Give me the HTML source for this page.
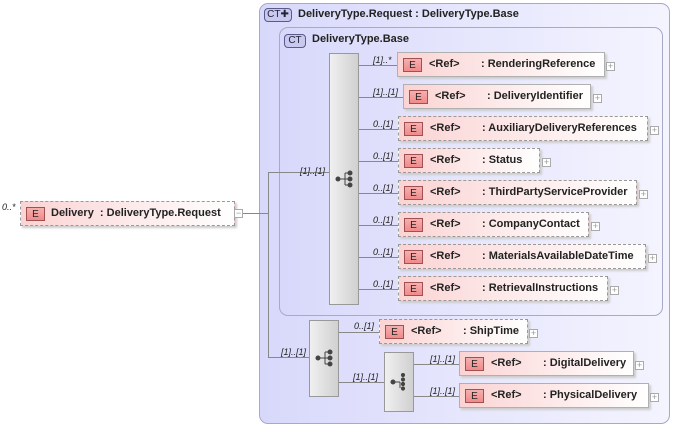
<!DOCTYPE html>
<html><head><meta charset="utf-8"><style>
body{margin:0;width:674px;height:426px;background:#fff;position:relative;overflow:hidden;font-family:"Liberation Sans",sans-serif}
div{position:absolute;box-sizing:border-box}
.ct{border:1px solid #a8a8c8;border-radius:9px;background:linear-gradient(to right,#d8d8fb,#f4f4ff)}
.badge{border:1px solid #5a5a8a;border-radius:4px;background:#c8c8f0;font-size:10px;line-height:12px;height:14px;text-align:center;color:#223}
.t{font-size:11px;font-weight:bold;color:#222;white-space:nowrap}
.el{height:25px;border:1px solid #b0b0b0;background:linear-gradient(to right,#fbd3d3,#ffffff);box-shadow:2px 2px 2px #ccc}
.el.d{border:1px dashed #999}
.el .e{left:5px;top:5px;width:19px;height:14px;border:1px solid #a05050;background:linear-gradient(#f5b0b0,#f08a8a);font-size:10px;text-align:center;line-height:13px;color:#222}
.el .r{left:31px;top:5px;font-size:11px;font-weight:bold;color:#222;white-space:nowrap}
.el .n{top:5px;font-size:11px;font-weight:bold;color:#222;white-space:nowrap}
.pl{width:9px;height:9px;border:1px solid #aaa;background:#fff;font-size:9px;line-height:7px;text-align:center;color:#999}
.seq{border:1px solid #999;background:linear-gradient(to right,#f0f0f0,#d0d0d0)}
.h{height:1px;background:#888}.v{width:1px;background:#888}
.c{font-size:9px;font-style:italic;color:#222;white-space:nowrap}
</style></head><body>
<div class="ct" style="left:259px;top:3px;width:411px;height:421px"></div>
<div class="badge" style="left:264px;top:8px;width:28px">CT✚</div>
<div class="t" style="left:298px;top:8px">DeliveryType.Request : DeliveryType.Base</div>
<div class="ct" style="left:279px;top:27px;width:384px;height:289px"></div>
<div class="badge" style="left:284px;top:34px;width:22px">CT</div>
<div class="t" style="left:312px;top:33px">DeliveryType.Base</div>

<div class="seq" style="left:329px;top:53px;width:30px;height:252px"></div>
<svg style="position:absolute;left:335px;top:170px" width="20" height="18"><g fill="#444" stroke="#444"><circle cx="3" cy="9" r="2"/><line x1="3" y1="9" x2="10" y2="9"/><line x1="10" y1="3" x2="10" y2="15"/><line x1="10" y1="3" x2="15" y2="3"/><line x1="10" y1="9" x2="15" y2="9"/><line x1="10" y1="15" x2="15" y2="15"/><circle cx="15" cy="3" r="2"/><circle cx="15" cy="9" r="2"/><circle cx="15" cy="15" r="2"/></g></svg>

<!-- connector lines -->
<div class="h" style="left:236px;top:213px;width:32px"></div>
<div class="v" style="left:268px;top:172px;height:186px"></div>
<div class="h" style="left:268px;top:172px;width:61px"></div>
<div class="h" style="left:268px;top:357px;width:41px"></div>
<div class="c" style="left:300px;top:166px">[1]..[1]</div>
<div class="c" style="left:281px;top:347px">[1]..[1]</div>

<div class="c" style="left:2px;top:202px">0..*</div>
<div class="el d" style="left:20px;top:201px;width:215px"><div class="e">E</div><div class="r" style="left:30px">Delivery&nbsp;&nbsp;: DeliveryType.Request</div></div>
<div class="pl" style="left:234px;top:209px">−</div>

<!-- children of seq1 -->
<div class="h" style="left:359px;top:65px;width:38px"></div><div class="c" style="left:373px;top:55px">[1]..*</div>
<div class="el" style="left:397px;top:52px;width:208px"><div class="e">E</div><div class="r">&lt;Ref&gt;</div><div class="n" style="left:83px">: RenderingReference</div></div><div class="pl" style="left:606px;top:62px">+</div>

<div class="h" style="left:359px;top:97px;width:44px"></div><div class="c" style="left:373px;top:87px">[1]..[1]</div>
<div class="el" style="left:403px;top:84px;width:188px"><div class="e">E</div><div class="r">&lt;Ref&gt;</div><div class="n" style="left:83px">: DeliveryIdentifier</div></div><div class="pl" style="left:593px;top:94px">+</div>

<div class="h" style="left:359px;top:129px;width:39px"></div><div class="c" style="left:373px;top:119px">0..[1]</div>
<div class="el d" style="left:398px;top:116px;width:250px"><div class="e">E</div><div class="r">&lt;Ref&gt;</div><div class="n" style="left:83px">: AuxiliaryDeliveryReferences</div></div><div class="pl" style="left:650px;top:126px">+</div>

<div class="h" style="left:359px;top:161px;width:39px"></div><div class="c" style="left:373px;top:151px">0..[1]</div>
<div class="el d" style="left:398px;top:148px;width:142px"><div class="e">E</div><div class="r">&lt;Ref&gt;</div><div class="n" style="left:83px">: Status</div></div><div class="pl" style="left:542px;top:158px">+</div>

<div class="h" style="left:359px;top:193px;width:39px"></div><div class="c" style="left:373px;top:183px">0..[1]</div>
<div class="el d" style="left:398px;top:180px;width:239px"><div class="e">E</div><div class="r">&lt;Ref&gt;</div><div class="n" style="left:83px">: ThirdPartyServiceProvider</div></div><div class="pl" style="left:639px;top:190px">+</div>

<div class="h" style="left:359px;top:225px;width:39px"></div><div class="c" style="left:373px;top:215px">0..[1]</div>
<div class="el d" style="left:398px;top:212px;width:191px"><div class="e">E</div><div class="r">&lt;Ref&gt;</div><div class="n" style="left:83px">: CompanyContact</div></div><div class="pl" style="left:591px;top:222px">+</div>

<div class="h" style="left:359px;top:257px;width:39px"></div><div class="c" style="left:373px;top:247px">0..[1]</div>
<div class="el d" style="left:398px;top:244px;width:248px"><div class="e">E</div><div class="r">&lt;Ref&gt;</div><div class="n" style="left:83px">: MaterialsAvailableDateTime</div></div><div class="pl" style="left:648px;top:254px">+</div>

<div class="h" style="left:359px;top:289px;width:39px"></div><div class="c" style="left:373px;top:279px">0..[1]</div>
<div class="el d" style="left:398px;top:276px;width:210px"><div class="e">E</div><div class="r">&lt;Ref&gt;</div><div class="n" style="left:83px">: RetrievalInstructions</div></div><div class="pl" style="left:610px;top:286px">+</div>

<!-- bottom -->
<div class="seq" style="left:309px;top:320px;width:30px;height:77px"></div>
<svg style="position:absolute;left:315px;top:349px" width="20" height="18"><g fill="#444" stroke="#444"><circle cx="3" cy="9" r="2"/><line x1="3" y1="9" x2="10" y2="9"/><line x1="10" y1="3" x2="10" y2="15"/><line x1="10" y1="3" x2="15" y2="3"/><line x1="10" y1="9" x2="15" y2="9"/><line x1="10" y1="15" x2="15" y2="15"/><circle cx="15" cy="3" r="2"/><circle cx="15" cy="9" r="2"/><circle cx="15" cy="15" r="2"/></g></svg>
<div class="h" style="left:339px;top:332px;width:40px"></div><div class="c" style="left:354px;top:321px">0..[1]</div>
<div class="el d" style="left:379px;top:319px;width:149px"><div class="e">E</div><div class="r">&lt;Ref&gt;</div><div class="n" style="left:83px">: ShipTime</div></div><div class="pl" style="left:529px;top:329px">+</div>

<div class="h" style="left:339px;top:382px;width:45px"></div><div class="c" style="left:353px;top:372px">[1]..[1]</div>
<div class="seq" style="left:384px;top:352px;width:30px;height:60px"></div>
<svg style="position:absolute;left:390px;top:373px" width="20" height="18"><g fill="#444" stroke="#444"><circle cx="3" cy="9" r="2"/><line x1="3" y1="9" x2="10" y2="9"/><circle cx="13" cy="2" r="1.6"/><circle cx="13" cy="6.5" r="1.6"/><circle cx="13" cy="11" r="1.6"/><circle cx="13" cy="15.5" r="1.6"/><line x1="10" y1="9" x2="10" y2="15"/></g></svg>
<div class="h" style="left:414px;top:364px;width:45px"></div><div class="c" style="left:430px;top:354px">[1]..[1]</div>
<div class="el" style="left:459px;top:351px;width:175px"><div class="e">E</div><div class="r">&lt;Ref&gt;</div><div class="n" style="left:83px">: DigitalDelivery</div></div><div class="pl" style="left:635px;top:361px">+</div>
<div class="h" style="left:414px;top:396px;width:45px"></div><div class="c" style="left:430px;top:386px">[1]..[1]</div>
<div class="el" style="left:459px;top:383px;width:190px"><div class="e">E</div><div class="r">&lt;Ref&gt;</div><div class="n" style="left:83px">: PhysicalDelivery</div></div><div class="pl" style="left:650px;top:393px">+</div>
</body></html>
